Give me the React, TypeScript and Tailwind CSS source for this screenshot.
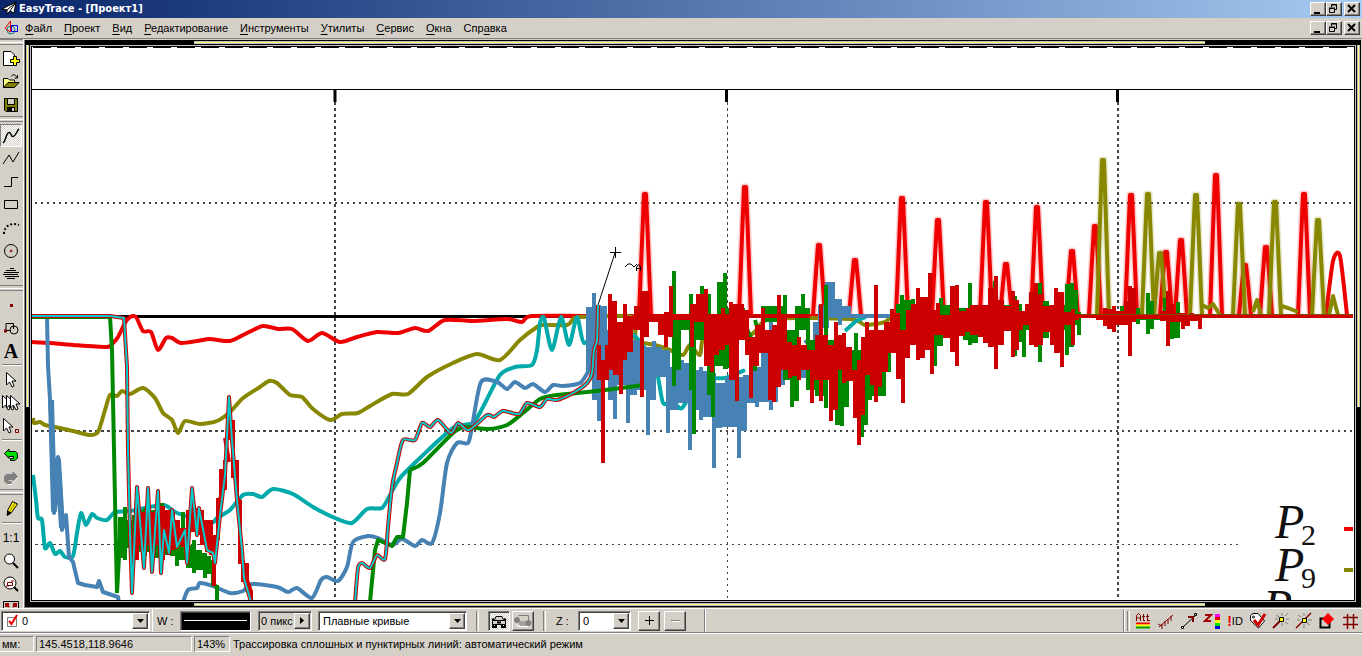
import React from 'react';

type Bar = [number, number, number];

const raised =
  'border border-t-white border-l-white border-r-[#404040] border-b-[#404040] shadow-[inset_-1px_-1px_0_#808080] bg-[#d4d0c8]';
const sunken =
  'border border-t-[#808080] border-l-[#808080] border-r-white border-b-white shadow-[inset_1px_1px_0_#404040]';
const dither =
  'bg-[repeating-conic-gradient(#ffffff_0_25%,#d4d0c8_0_50%)] bg-[length:2px_2px]';

// vertical columns, joined by the range that each shares with its neighbour
const noise = (bars: Bar[]) =>
  bars
    .map(([x, top, bottom], i) => {
      const column = `M${x} ${top}V${bottom}`;
      const next = bars[i + 1];
      if (!next) return column;
      const hi = Math.max(top, next[1]) + 2;
      const lo = Math.min(bottom, next[2]) - 2;
      return hi < lo ? `${column}M${x} ${hi}H${next[0]}V${lo}H${x}Z` : `${column}M${x} ${lo}L${next[0]} ${hi}`;
    })
    .join('');

// Catmull-Rom curve through "x y" pairs
const smooth = (source: string) => {
  const p = source.split(' ').map((pair) => pair.split(',').map(Number));
  let d = `M${p[0][0]} ${p[0][1]}`;
  for (let i = 0; i < p.length - 1; i++) {
    const a = p[Math.max(i - 1, 0)];
    const b = p[i];
    const c = p[i + 1];
    const e = p[Math.min(i + 2, p.length - 1)];
    d += `C${b[0] + (c[0] - a[0]) / 8} ${b[1] + (c[1] - a[1]) / 8} ${c[0] - (e[0] - b[0]) / 8} ${c[1] - (e[1] - b[1]) / 8} ${c[0]} ${c[1]}`;
  }
  return d;
};

const spike = (x: number, top: number) => {
  const shoulder = Math.round(top + (316 - top) * 0.4);
  return `M${x - 6} 315L${x - 3} ${shoulder}L${x - 1} ${top + 2}h2L${x + 3} ${shoulder}L${x + 6} 315`;
};

const redSpikes: [number, number][] = [
  [645, 192], [745, 185], [819, 243], [855, 258], [902, 196], [938, 218], [986, 200],
  [1006, 262], [1037, 205], [1072, 249], [1095, 224], [1131, 193], [1166, 250], [1181, 238],
  [1216, 173], [1245, 263], [1266, 245], [1304, 192],
];

const oliveSpikes: [number, number][] = [
  [1103, 158], [1148, 192], [1160, 251], [1196, 193], [1239, 202], [1275, 200], [1318, 218],
];

const blueBars: Bar[] = [
  [588, 307, 373], [594, 293, 400], [599, 305, 421], [605, 306, 372], [610, 330, 400],
  [615, 335, 419], [622, 330, 385], [628, 350, 423], [635, 340, 395], [642, 308, 390],
  [648, 347, 435], [654, 341, 400], [660, 347, 377], [668, 350, 433], [676, 367, 410],
  [682, 360, 403], [690, 363, 450], [695, 370, 410], [701, 367, 420], [707, 371, 417],
  [714, 373, 468], [720, 383, 428], [727, 377, 427], [733, 377, 427], [739, 377, 458],
  [745, 375, 431], [752, 360, 403], [757, 367, 407], [763, 352, 402], [771, 322, 410],
  [776, 365, 402], [783, 357, 385], [794, 360, 378], [805, 350, 378], [815, 322, 342],
  [820, 305, 340], [827, 282, 328], [833, 282, 317], [840, 299, 325], [849, 306, 317],
];

const greenLeft: Bar[] = [
  [120, 517, 558], [125, 507, 560], [129, 520, 548], [134, 515, 555], [139, 510, 552],
  [145, 508, 556], [151, 510, 552], [157, 506, 558], [162, 503, 552], [167, 510, 555],
  [172, 512, 556], [177, 530, 566], [183, 512, 560], [188, 545, 568], [194, 540, 573],
  [200, 550, 570], [205, 553, 578], [209, 556, 574], [213, 560, 586], [217, 585, 602],
];

const greenMid: Bar[] = [
  [674, 271, 386], [679, 320, 370], [686, 316, 330], [691, 294, 390], [694, 320, 434],
  [702, 286, 340], [709, 294, 395], [713, 350, 417], [719, 282, 366], [725, 273, 369],
  [730, 308, 368], [737, 316, 330], [743, 308, 322], [755, 345, 371], [763, 306, 322],
  [785, 295, 380], [792, 330, 407], [797, 306, 401], [803, 294, 330], [808, 308, 390],
  [817, 340, 396], [826, 285, 408], [832, 340, 380], [837, 350, 425], [842, 350, 426],
  [847, 350, 407], [856, 333, 370], [862, 350, 437], [866, 350, 425], [870, 350, 400],
  [884, 350, 396], [889, 340, 372], [898, 304, 337], [902, 295, 330], [908, 300, 338],
  [913, 299, 344], [924, 305, 330], [935, 310, 366], [941, 298, 346], [955, 305, 330],
  [965, 308, 340], [970, 283, 345], [976, 308, 343], [986, 305, 330], [995, 281, 330],
  [1005, 305, 330], [1015, 296, 356], [1020, 304, 342], [1024, 312, 357], [1033, 305, 330],
  [1040, 283, 362], [1047, 301, 338], [1057, 305, 330], [1067, 284, 355], [1072, 283, 347],
  [1076, 290, 325], [1079, 312, 335],
];

const greenRight: Bar[] = [
  [1122, 306, 320], [1130, 308, 322], [1138, 308, 324], [1143, 314, 320], [1148, 293, 334],
  [1152, 301, 329], [1158, 314, 320], [1165, 298, 321], [1172, 316, 339], [1178, 302, 338],
];

const darkLeft: Bar[] = [
  [137, 490, 560], [142, 512, 545], [148, 490, 545], [153, 512, 556], [158, 495, 545],
  [163, 506, 560], [168, 510, 548], [173, 512, 550], [178, 520, 545], [183, 528, 547],
  [188, 510, 555], [192, 490, 532], [197, 508, 535], [202, 510, 545], [207, 520, 552],
  [211, 520, 555], [214, 535, 586], [218, 498, 540], [221, 469, 500], [225, 460, 490],
  [229, 397, 440], [233, 420, 478], [237, 460, 500], [240, 500, 564], [243, 560, 582],
  [247, 563, 582], [251, 590, 602],
];

const darkMid: Bar[] = [
  [599, 345, 380], [603, 360, 463], [607, 345, 380], [610, 294, 370], [615, 301, 375],
  [621, 322, 394], [625, 304, 360], [631, 316, 352], [636, 306, 330], [642, 291, 397],
  [647, 291, 337], [654, 315, 322], [660, 315, 335], [666, 312, 347], [671, 286, 337],
  [676, 315, 320], [685, 315, 320], [692, 304, 347], [698, 294, 322], [706, 289, 366],
  [712, 316, 372], [717, 315, 355], [723, 308, 350], [727, 315, 345], [731, 302, 380],
  [737, 304, 401], [742, 304, 340], [747, 310, 355], [751, 337, 398], [757, 325, 366],
  [763, 308, 353], [770, 330, 400], [774, 325, 402], [779, 295, 387], [785, 315, 370],
  [790, 342, 378], [795, 345, 376], [799, 337, 380], [805, 345, 370], [812, 350, 403],
  [817, 335, 380], [821, 304, 401], [826, 335, 380], [831, 345, 421], [836, 322, 410],
  [840, 335, 370], [844, 333, 383], [850, 347, 381], [855, 370, 418], [859, 360, 445],
  [863, 337, 415], [867, 322, 375], [872, 330, 385], [876, 285, 402], [880, 330, 387],
  [886, 322, 372], [892, 309, 353], [898, 313, 379], [903, 330, 403], [908, 310, 358],
  [913, 304, 345], [918, 288, 360], [923, 297, 358], [930, 273, 350], [932, 310, 374],
  [938, 303, 335], [945, 315, 338], [952, 286, 352], [957, 285, 366], [963, 311, 336],
  [968, 308, 332], [972, 305, 335], [980, 305, 337], [985, 305, 343], [990, 288, 347],
  [996, 276, 369], [1002, 300, 345], [1007, 306, 331], [1013, 291, 357], [1017, 300, 350],
  [1021, 311, 330], [1027, 304, 325], [1031, 292, 345], [1036, 283, 347], [1041, 294, 345],
  [1047, 306, 332], [1052, 305, 345], [1056, 288, 353], [1062, 292, 367], [1067, 312, 325],
  [1073, 309, 345], [1077, 314, 320],
];

const darkRight: Bar[] = [
  [1098, 315, 320], [1105, 308, 326], [1109, 309, 329], [1114, 306, 332], [1122, 311, 325],
  [1126, 301, 325], [1130, 286, 356], [1134, 288, 322], [1142, 315, 319], [1155, 315, 319],
  [1162, 311, 321], [1168, 291, 346], [1172, 304, 322], [1183, 313, 329], [1188, 314, 326],
  [1192, 313, 321], [1200, 314, 329],
];

const traceLeft =
  'M32 316H110L124 318L127 367L128 450L130 533L132 593L137 487L144 568L148 488L152 572L158 491L161 573L164 530L169 553L172 510L177 547L185 530L187 563L192 488L197 535L199 508L207 550L213 553L215 563L220 515L225 475L229 397L232 440L237 500L242 550L244 578L251 602';
const traceRight = smooth(
  '355,602 358,568 362,563 370,568 377,555 385,559 388,527 392,487 397,463 403,440 415,440 422,423 430,427 438,420 451,433 458,423 469,430 487,415 494,417 503,411 519,414 527,403 540,407 547,399 557,400 573,393 587,383 592,373 594,350 597,340 598,305'
);

const Plot: React.FC = () => (
  <svg
    className="block h-full w-full"
    role="img"
    aria-label="Растр с трассируемыми кривыми"
    fill="none"
    strokeLinejoin="round"
  >
    <g transform="translate(-32 -47)">
      <path d="M32 47.5H1353" stroke="#000" strokeDasharray="18 6" strokeDashoffset="23" />
      <path d="M32 89.5H1353" stroke="#000" />
      <g stroke="#444">
        <path d="M35 203H1353" strokeWidth="2" strokeDasharray="2 4" />
        <path d="M35 431H330" strokeWidth="2" strokeDasharray="3 3" />
        <path d="M330 431H1353" strokeWidth="2" strokeDasharray="2 4" />
        <path d="M35 544.5H330" strokeDasharray="3 3" />
        <path d="M330 544.5H1240" strokeDasharray="2 4" />
        <path d="M335 102V600" strokeWidth="2" strokeDasharray="3 3" />
        <path d="M727.500 102V440" strokeDasharray="3 3" />
        <path d="M727.500 440V600" strokeDasharray="2 4" />
        <path d="M1118 102V600" strokeWidth="2" strokeDasharray="3 3" />
      </g>
      <path d="M335 90V102M726.500 90V102M1117.500 90V102" stroke="#000" strokeWidth="3" />
      <path d="M32 316.500H640" stroke="#000" strokeWidth="3" />

      <g stroke="#ee0000" strokeWidth="4">
        <path
          d={smooth(
            '32,342 50,343 73,345 107,347 113,343 118,337 125,323 130,317 136,317 143,331 151,332 158,350 166,338 172,338 181,343 197,341 210,339 230,341 247,333 263,326 278,329 292,329 308,341 322,333 340,342 357,337 377,332 398,333 415,328 428,331 445,320 473,321 507,319 522,322 532,316 600,316 830,316'
          )}
        />
        <path d={smooth('1326,315 1333,261 1340,256 1347,315')} />
        {redSpikes.map(([x, top]) => (
          <g key={x}>
            <path d={spike(x, top)} strokeWidth="7" opacity="0.2" />
            <path d={spike(x, top)} />
          </g>
        ))}
      </g>

      <g stroke="#888800" strokeWidth="4">
        <path
          d={smooth(
            '33,418 34,423 40,422 45,425 55,427 73,431 89,435 98,432 105,410 110,395 117,396 122,391 130,394 143,388 155,398 163,413 172,420 178,433 185,421 200,424 217,421 230,412 243,398 260,387 269,381 277,383 290,395 302,397 313,409 330,420 342,414 358,413 370,406 392,394 408,394 427,377 453,363 477,354 500,360 520,340 537,327 543,325 567,325 573,319 580,317 632,317 636,340 655,345 670,350 683,355 690,345 700,355 706,335 750,335 770,319 850,319 865,325 885,322 890,317'
          )}
        />
        <path d="M1202 305L1208 308L1213 304L1220 315M1281 306L1288 308L1298 312M1253 312L1257 300L1261 315M1329 315L1333 296L1338 315" />
        {oliveSpikes.map(([x, top]) => (
          <g key={x}>
            <path d={spike(x, top)} strokeWidth="7" opacity="0.2" />
            <path d={spike(x, top)} />
          </g>
        ))}
      </g>

      <path
        stroke="#00aaaa"
        strokeWidth="4"
        d={smooth(
          '33,475 36,500 38,518 42,520 45,548 50,543 55,554 60,551 65,557 73,556 77,533 81,513 86,525 92,514 97,518 107,520 115,512 130,511 163,505 177,513 210,523 217,518 230,510 243,495 253,494 262,497 273,489 293,494 313,507 335,518 352,523 367,509 382,508 390,495 400,478 420,458 453,428 473,423 483,407 500,375 515,367 532,365 537,350 540,323 544,318 552,350 561,317 569,345 577,317 584,343 600,330 628,345 634,335 655,365 663,403 672,400 682,408 700,380 725,378 745,370'
        )}
      />
      <path d="M845 331L856 321L866 317" stroke="#00aaaa" strokeWidth="4" />

      <g stroke="#4682b4" strokeWidth="4">
        <path d="M47 317L48 366L52 433L54 513L58 457L61 500L62 530L66 515L69 557L73 562L78 583L85 585L97 587L99 581L103 592L118 597L119 603" />
        <path d="M51 400L54 510L58 460L62 528" strokeWidth="6" />
        <path
          d={smooth(
            '183,602 188,590 197,588 200,583 213,586 230,593 243,591 252,584 277,587 288,592 297,588 312,598 321,580 327,577 338,581 347,567 353,542 368,536 378,538 392,545 402,539 415,546 422,540 432,543 440,513 447,463 457,443 468,443 472,427 481,382 497,382 507,389 515,382 525,388 533,384 545,392 553,385 563,386 580,383 588,372'
          )}
        />
        <path d={noise(blueBars)} fill="#4682b4" strokeWidth="4" strokeLinejoin="miter" />
        <path d="M830 316H905" />
      </g>

      <g stroke="#008800" strokeWidth="4" strokeLinejoin="miter">
        <path d="M32 317H110L112 350L115 500L117 593L121 520" />
        <path d={noise(greenLeft)} fill="#008800" />
        <path d="M370 602L375 550L378 540L392 546L397 537L403 537L407 503L410 470" strokeLinejoin="round" />
        <path d={smooth('410,470 423,463 453,433 465,427 488,429 507,425 523,413 540,399 557,395 597,391 644,385')} />
        <path d={noise(greenMid)} fill="#008800" />
        <path d={noise(greenRight)} fill="#008800" />
      </g>

      <g stroke="#cc0000" strokeWidth="4">
        <path d="M640 316H810M1070 316H1353" />
        <g fill="#cc0000" strokeLinejoin="miter">
          <path d={noise(darkLeft)} />
          <path d={noise(darkMid)} />
          <path d={noise(darkRight)} />
        </g>
        <path d={traceLeft} />
        <path d={traceRight} />
      </g>
      <path d="M1080 314.500H1353" stroke="#884400" />
      <g stroke="#00cccc" strokeWidth="2">
        <path d={traceLeft} />
        <path d={traceRight} />
      </g>

      {/* rubber band and cursor */}
      <path d="M598 305L615 253" stroke="#000" />
      <path d="M610 252.500H621M615.500 247V258" stroke="#000" />
      <path d="M625 267L628 264L631 264L634 267L637 264M636.500 271V267L638.500 264.500L640.500 267V271M637 268.500H641" stroke="#000" />

      <g fill="#111" className="font-['Liberation_Serif',serif]" fontSize="48" fontStyle="italic">
        <text x="1275" y="538">
          P<tspan x="1301" dy="7" fontSize="30" fontStyle="normal">2</tspan>
        </text>
        <text x="1275" y="581">
          P<tspan x="1301" dy="7" fontSize="30" fontStyle="normal">9</tspan>
        </text>
        <text x="1263" y="623">P</text>
      </g>
      <path d="M1344 529H1353" stroke="#ee0000" strokeWidth="4" />
      <path d="M1344 570H1353" stroke="#888800" strokeWidth="4" />
    </g>
  </svg>
);

const Icon: React.FC<{ children: React.ReactNode }> = ({ children }) => (
  <svg width="18" height="18" viewBox="0 0 18 18" fill="none" stroke="#000" className="shrink-0">
    {children}
  </svg>
);

const Tool: React.FC<{ label: string; active?: boolean; children: React.ReactNode }> = ({
  label,
  active,
  children,
}) => (
  <button
    aria-label={label}
    aria-pressed={active}
    className={`flex h-[23px] w-[22px] shrink-0 items-center justify-center ${
      active ? `${dither} border border-t-[#808080] border-l-[#808080] border-r-white border-b-white` : ''
    }`}
  >
    {children}
  </button>
);

const Grip = () => (
  <div className="flex h-[8px] shrink-0 flex-col justify-center border-t border-[#808080]">
    <div className="h-[3px] border-t border-b border-t-white border-b-[#808080]" />
  </div>
);

const Rule = () => (
  <div className="flex h-[6px] w-[20px] shrink-0 items-center self-center">
    <div className="h-[2px] w-full border-t border-b border-t-[#808080] border-b-white" />
  </div>
);

const arrow = 'M2.500 1.500V14L5.500 11L8 16L10 15L8 10H12Z';

const SideBar: React.FC = () => (
  <aside className="flex w-[24px] shrink-0 flex-col overflow-hidden border-r border-white">
    <Grip />
    <Tool label="Новый">
      <Icon>
        <path d="M1.500 1.500H9L12.500 5V15.500H1.500Z" fill="#fff" />
        <path d="M11.500 6.500h3v3h3v3h-3v3h-3v-3h-3v-3h3Z" fill="#ffff00" />
      </Icon>
    </Tool>
    <Tool label="Открыть">
      <Icon>
        <path d="M1.500 14.500V5.500H6L7.500 7H12.500V10" fill="#ffff80" />
        <path d="M1.500 14.500L6 9.500H17L12.500 14.500Z" fill="#808000" />
        <path d="M9 3.500C11 1 13 1 15 4.500M15.500 2V5H12.500" />
      </Icon>
    </Tool>
    <Tool label="Сохранить">
      <Icon>
        <path d="M2.500 2.500H15.500V15.500H4L2.500 14Z" fill="#808000" />
        <path d="M5.500 2.500H12.500V8.500H5.500Z" fill="#d4d0c8" />
        <path d="M5 11H13V16H5Z" fill="#000" stroke="none" />
        <path d="M10 12H12V15H10Z" fill="#d4d0c8" stroke="none" />
      </Icon>
    </Tool>
    <Grip />
    <Tool label="Кривая" active>
      <Icon>
        <path d="M1 16C4 14 4 6 7 5.500C9.500 5 8.500 10 11 9.500C14 9 14 5 17 2" strokeWidth="1.500" />
      </Icon>
    </Tool>
    <Tool label="Ломаная"><Icon><path d="M1 14L7 5L11 12L17 2" /></Icon></Tool>
    <Tool label="Ортогональная линия"><Icon><path d="M2 13.500H9.500V4.500H16" /></Icon></Tool>
    <Tool label="Прямоугольник"><Icon><path d="M2.500 4.500H15.500V12.500H2.500Z" /></Icon></Tool>
    <Tool label="Пунктирная линия">
      <Icon><path d="M2 15C2 7 9 3 17 6" strokeWidth="2" strokeDasharray="2 2" /></Icon>
    </Tool>
    <Tool label="Окружность">
      <Icon>
        <circle cx="9" cy="9" r="6.500" />
        <path d="M7.500 9H10.500M9 7.500V10.500" stroke="#800000" />
      </Icon>
    </Tool>
    <Tool label="Штриховка">
      <Icon><path d="M8 3.500H12M4 5.500H14M2 7.500H17M1 9.500H16M3 11.500H17M5 13.500H13" /></Icon>
    </Tool>
    <Grip />
    <Tool label="Точка"><Icon><path d="M8 9.500H11" stroke="#800000" strokeWidth="3" /></Icon></Tool>
    <Tool label="Полигон">
      <Icon>
        <path d="M4 12V4.500H11.500V10M4 11.500H9" />
        <circle cx="12" cy="11" r="4" />
        <path d="M2 12H5" stroke="#800000" strokeWidth="3" />
      </Icon>
    </Tool>
    <Tool label="Текст">
      <span className="font-['Liberation_Serif',serif] text-[20px] leading-[20px] font-bold">A</span>
    </Tool>
    <Rule />
    <Tool label="Выбор">
      <Icon><g transform="translate(2 0)"><path d={arrow} fill="#fff" /></g></Icon>
    </Tool>
    <Tool label="Групповой выбор">
      <Icon>
        <g transform="translate(-2 0)"><path d={arrow} fill="#fff" /></g>
        <g transform="translate(2 0)"><path d={arrow} fill="#fff" /></g>
        <g transform="translate(6 0)"><path d={arrow} fill="#fff" /></g>
      </Icon>
    </Tool>
    <Tool label="Выбор узла">
      <Icon>
        <g transform="translate(-1 0)"><path d={arrow} fill="#fff" /></g>
        <path d="M13.500 12.500H16.500V15.500H13.500Z" stroke="#800000" />
      </Icon>
    </Tool>
    <Rule />
    <Tool label="Отменить">
      <Icon><path d="M2.500 7.500L7 3V5.500H13.500L15.500 7.500V12L13 14.500H8.500V12.500H11.500V10.500H7V12.500Z" fill="#00dd00" /></Icon>
    </Tool>
    <Tool label="Повторить">
      <Icon>
        <path d="M15.500 7.500L11 3V5.500H4L2.500 7.500V12L5 14.500H9V12.500H6V10.500H11V12.500Z" fill="#808080" stroke="#808080" />
        <path d="M6 15.500H10M11 13L16 8.500" stroke="#fff" />
      </Icon>
    </Tool>
    <Grip />
    <Tool label="Карандаш">
      <Icon>
        <path d="M5.500 10.500L10.500 1.500L15.500 4L9.500 12.500L5.500 15.500Z" fill="#ffee00" />
        <path d="M5 15L6 11L9 13Z" fill="#000" />
        <path d="M8 11L13 3" stroke="#808000" />
      </Icon>
    </Tool>
    <Rule />
    <Tool label="Масштаб один к одному"><span className="text-[12px] leading-[14px]">1:1</span></Tool>
    <Tool label="Лупа">
      <Icon>
        <circle cx="7.500" cy="7" r="5" fill="#fff" />
        <path d="M11 11L16 16" strokeWidth="2" />
      </Icon>
    </Tool>
    <Tool label="Масштаб рамкой">
      <Icon>
        <circle cx="8" cy="8" r="6" fill="#fff" />
        <path d="M5.500 7.500H10.500V10.500H5.500ZM4 11H7M9 6H12" stroke="#800000" />
        <path d="M12 12L16 16" strokeWidth="2" />
      </Icon>
    </Tool>
    <Tool label="Показать всё">
      <Icon>
        <path d="M1.500 3.500H16.500V16.500H1.500Z" fill="#d4d0c8" />
        <path d="M4 9V6H7M4 6L7 9M14 9V6H11M14 6L11 9" stroke="#a00000" strokeWidth="2" />
      </Icon>
    </Tool>
  </aside>
);

const WindowButtons: React.FC<{ target: string }> = ({ target }) => (
  <div className="flex shrink-0 pr-[2px]">
    <button aria-label={`Свернуть ${target}`} className={`h-[14px] w-[16px] ${raised}`}>
      <svg width="14" height="12" viewBox="0 0 14 12"><path d="M3 9H9V11H3Z" /></svg>
    </button>
    <button aria-label={`Восстановить ${target}`} className={`h-[14px] w-[16px] ${raised}`}>
      <svg width="14" height="12" viewBox="0 0 14 12" fill="none" stroke="#000">
        <path d="M4.500 4V1.500H9.500V6.500H8M4 2H10M2.500 5.500H7.500V9.500H2.500ZM2 5H8" />
      </svg>
    </button>
    <button aria-label={`Закрыть ${target}`} className={`ml-[2px] h-[14px] w-[16px] ${raised}`}>
      <svg width="14" height="12" viewBox="0 0 14 12" fill="none" stroke="#000" strokeWidth="2">
        <path d="M3 2L10 9M10 2L3 9" />
      </svg>
    </button>
  </div>
);

// text before the accelerator, the accelerator, text after it
const menu: [string, string, string][] = [
  ['', 'Ф', 'айл'],
  ['', 'П', 'роект'],
  ['', 'В', 'ид'],
  ['', 'Р', 'едактирование'],
  ['', 'И', 'нструменты'],
  ['', 'У', 'тилиты'],
  ['', 'С', 'ервис'],
  ['', 'О', 'кна'],
  ['Спр', 'а', 'вка'],
];

const Drop: React.FC<{ label: string; id: string; value: string; className: string; children?: React.ReactNode }> = ({
  label,
  id,
  value,
  className,
  children,
}) => (
  <div className={`flex h-[20px] shrink-0 items-center bg-white p-px ${sunken} ${className}`}>
    {children}
    <select id={id} aria-label={label} className="h-[16px] min-w-0 flex-1 appearance-none bg-transparent pl-[3px] leading-[14px] outline-none">
      <option>{value}</option>
    </select>
    <span className={`flex h-[16px] w-[16px] items-center justify-center ${raised}`}>
      <svg width="7" height="4" viewBox="0 0 7 4"><path d="M0 0H7L3.500 4Z" /></svg>
    </span>
  </div>
);

const Divider = () => (
  <div className="h-[20px] w-[3px] shrink-0 border-l border-r border-l-[#808080] border-r-white" />
);

const BottomBar: React.FC = () => (
  <div className="flex h-[25px] shrink-0 items-center border-t border-b border-t-white border-b-[#808080] pl-[1px]">
    <Drop id="layer" label="Слой" value="0" className="w-[149px]">
      <svg width="12" height="14" viewBox="0 0 12 14" fill="none" className="ml-[4px]">
        <path d="M.5 3.500H9.500V12.500H.5Z" stroke="#808080" />
        <path d="M2 7L4.500 10L10 1" stroke="#ee0000" strokeWidth="2" />
      </svg>
    </Drop>
    <div className="ml-[2px] h-[23px] w-px bg-white" />
    <span className="ml-[4px] w-[23px] shrink-0">W :</span>
    <button aria-label="Толщина линии" className={`flex h-[20px] w-[71px] shrink-0 items-center bg-black px-[3px] ${sunken}`}>
      <span className="h-px w-full bg-white" />
    </button>
    <div className={`ml-[7px] flex h-[20px] w-[54px] shrink-0 items-center p-px ${sunken}`}>
      <input aria-label="Ширина" defaultValue="0 пикс" className="w-[34px] min-w-0 bg-transparent pl-px outline-none" />
      <button aria-label="Единицы" className={`flex h-[16px] w-[16px] shrink-0 items-center justify-center ${raised}`}>
        <svg width="4" height="7" viewBox="0 0 4 7"><path d="M0 0V7L4 3.500Z" /></svg>
      </button>
    </div>
    <Drop id="mode" label="Тип линии" value="Плавные кривые" className="ml-[6px] w-[149px]" />
    <div className="ml-[9px]"><Divider /></div>
    <button aria-label="Автоматический режим" aria-pressed="true" className={`ml-[9px] flex h-[20px] w-[22px] shrink-0 items-center justify-center ${sunken} ${dither}`}>
      <svg width="16" height="14" viewBox="0 0 16 14" fill="none" stroke="#000">
        <path d="M3.500 6L5 2.500H11L12.500 6M1.500 6.500H14.500V10.500H1.500Z" fill="#d4d0c8" />
        <path d="M2 11V13H5V11M11 11V13H14V11M6 8.500H10M1 6L3 5M15 6L13 5" strokeWidth="2" />
      </svg>
    </button>
    <button aria-label="Ручной режим" className={`ml-[2px] flex h-[20px] w-[22px] shrink-0 items-center justify-center ${raised}`}>
      <svg width="18" height="14" viewBox="0 0 18 14" fill="none" stroke="#808080">
        <path d="M4.500 1.500H14.500V7" />
        <path d="M4 7H14V12H6Z" fill="#808080" fillOpacity=".6" stroke="none" />
        <circle cx="3" cy="6" r="2.500" fill="#808080" />
        <circle cx="14.500" cy="9" r="2.500" fill="#808080" />
        <path d="M2 10.500L5 12.500H14" stroke="#fff" />
      </svg>
    </button>
    <div className="ml-[9px]"><Divider /></div>
    <label htmlFor="z" className="ml-[10px] w-[22px] shrink-0">Z :</label>
    <Drop id="z" label="Z" value="0" className="w-[53px]" />
    <button aria-label="Увеличить" className={`ml-[7px] flex h-[20px] w-[22px] shrink-0 items-center justify-center ${raised}`}>
      <svg width="9" height="9" viewBox="0 0 9 9" stroke="#000"><path d="M0 4.500H9M4.500 0V9" /></svg>
    </button>
    <button aria-label="Уменьшить" className={`ml-[4px] flex h-[20px] w-[22px] shrink-0 items-center justify-center ${raised}`}>
      <svg width="9" height="9" viewBox="0 0 9 9"><path d="M0 4.500H9" stroke="#808080" /><path d="M1 5.500H10" stroke="#fff" /></svg>
    </button>
    <div className="ml-[18px] h-[23px] w-[2px] border-l border-r border-l-[#808080] border-r-white" />
    <div className="ml-auto h-[23px] w-[2px] border-l border-r border-l-[#808080] border-r-white" />
    <div className="ml-[2px]"><Divider /></div>
    <div className="ml-[2px] flex shrink-0 gap-px pr-px">
      <Tool label="Атрибуты">
        <Icon>
          <path d="M2.500 9V3.500L4.500 1.500L6.500 3.500V9M3 6H6M9.500 2V9M8 4.500H11M13.500 2V9M12 4.500H15M10 8.500H11M14 8.500H16" stroke="#800000" />
          <path d="M2 11.500H16" stroke="#ee0000" strokeWidth="2" />
          <path d="M2 13.500H16" stroke="#ffff00" strokeWidth="2" />
          <path d="M2 15.500H16" stroke="#00a000" strokeWidth="2" />
        </Icon>
      </Tool>
      <Tool label="Бергштрихи">
        <Icon><path d="M2 15L16 3M5 12V17M8 9V14M11 7V12M14 4V9M1 12L5 14" stroke="#800000" /></Icon>
      </Tool>
      <Tool label="Вектор">
        <Icon>
          <path d="M3 15L16 3M1.500 14.500h2v2h-2ZM14.500 1.500h2v2h-2Z" fill="#fff" />
          <path d="M8 5H13V10" stroke="#800000" strokeWidth="2" />
        </Icon>
      </Tool>
      <Tool label="Цвет по Z">
        <Icon>
          <path d="M2 3H8L2 9H8" stroke="#a00000" strokeWidth="2" />
          <path d="M12 2H17V5H12Z" fill="#ff00ff" stroke="none" />
          <path d="M12 5H17V8H12Z" fill="#ee0000" stroke="none" />
          <path d="M12 8H17V11H12Z" fill="#ffff00" stroke="none" />
          <path d="M12 11H17V14H12Z" fill="#00dd00" stroke="none" />
          <path d="M12 14H17V17H12Z" fill="#0000ee" stroke="none" />
        </Icon>
      </Tool>
      <Tool label="Проверка ID">
        <span className="text-[14px] leading-[14px] font-bold text-[#ee0000]">!</span>
        <span className="text-[11px] leading-[14px]">ID</span>
      </Tool>
      <Tool label="Проверка атрибутов">
        <Icon>
          <path d="M1.500 3.500L4 1.500H9L15.500 9L9.500 16L1.500 8.500Z" fill="#fff" />
          <circle cx="4.500" cy="5" r="1" />
          <path d="M5 8L9 13L16 2" stroke="#cc0000" strokeWidth="3" />
        </Icon>
      </Tool>
      <Tool label="Узел на конце">
        <Icon>
          <path d="M10 1V4M10 11V14M4 3L7 5M13 10L16 12M14 7H17M3 7H6M13 4L16 1" stroke="#808080" />
          <path d="M1 16L8 9" stroke="#800000" strokeWidth="2" />
          <path d="M7.500 5.500h4v4h-4Z" fill="#ffff00" />
        </Icon>
      </Tool>
      <Tool label="Узел на линии">
        <Icon>
          <path d="M9 1V4M9 12V16M3 3L6 5M12 11L15 13M13 8H17M2 8H5" stroke="#808080" />
          <path d="M1 16L16 1" stroke="#800000" strokeWidth="1.500" />
          <path d="M7.500 6.500h4v4h-4Z" fill="#ffff00" />
        </Icon>
      </Tool>
      <Tool label="Замкнутость">
        <Icon>
          <path d="M2.500 6.500H11.500V15.500H2.500Z" strokeWidth="2" />
          <path d="M10 1L16 7L10 13L4 7Z" fill="#ff0000" stroke="none" />
        </Icon>
      </Tool>
      <Tool label="Сетка">
        <Icon><path d="M6.500 2V17M12.500 2V17M2 5.500H17M2 12.500H17" stroke="#800000" strokeWidth="1.500" /></Icon>
      </Tool>
    </div>
  </div>
);

const RulerX: React.FC = () => (
  <div className="flex h-[3px] shrink-0 pr-[156px] pl-[169px]">
    <div className="flex-1 border-y border-l border-[#c0c0c0] bg-[#ffff80]" />
  </div>
);

const RulerY: React.FC = () => (
  <div className="w-[3px] shrink-0">
    <div className="h-[65%] border-x border-[#c0c0c0] bg-[#ffff80]" />
  </div>
);

const cell = 'h-[16px] shrink-0 border border-t-[#808080] border-l-[#808080] border-r-white border-b-white pl-[2px]';

const App: React.FC = () => (
  <div className="flex h-screen flex-col overflow-hidden bg-[#d4d0c8] font-['Liberation_Sans',sans-serif] text-[11px] leading-[14px] text-black">
    <header className="flex h-[18px] shrink-0 items-center bg-linear-to-r from-[#0a246a] to-[#a6caf0] pl-px">
      <svg width="16" height="16" viewBox="0 0 16 16" stroke="#000">
        <path d="M1 8L15 1L13 12L9 10L6 13V9Z" fill="#fff" />
        <path d="M15 1L6 9M15 1L9 10" fill="none" />
      </svg>
      <h1 className="flex-1 pl-[2px] font-['DejaVu_Sans_Condensed','DejaVu_Sans',sans-serif] font-bold text-white">
        EasyTrace - [Проект1]
      </h1>
      <WindowButtons target="программу" />
    </header>

    <nav className="flex h-[20px] shrink-0 items-center pl-[4px]">
      <svg width="15" height="16" viewBox="0 0 15 16" fill="none">
        <circle cx="7" cy="10" r="4" stroke="#008080" />
        <path d="M1 8.500L6.500 1V12Z" stroke="#ee0000" />
        <path d="M7.500 5.500H13.500V11.500H7.500Z" stroke="#0000ee" />
      </svg>
      <div className="flex flex-1">
        {menu.map(([before, key, after]) => (
          <button key={key} className="px-[6px]">
            {before}
            <u className="underline-offset-2">{key}</u>
            {after}
          </button>
        ))}
      </div>
      <WindowButtons target="документ" />
    </nav>

    <div className="flex min-h-0 flex-1 border-t border-[#808080]">
      <SideBar />
      <main className="mt-px flex min-w-0 flex-1 flex-col border-r border-b border-l border-r-[#d4d0c8] border-b-[#808080] border-l-[#808080] bg-black py-px">
        <RulerX />
        <div className="mt-px mb-px flex min-h-0 flex-1 px-px">
          <RulerY />
          <div className="mx-px min-w-0 flex-1 border border-[#c0c0c0]">
            <div className="h-full border border-black bg-white">
              <Plot />
            </div>
          </div>
          <RulerY />
        </div>
        <RulerX />
      </main>
    </div>

    <BottomBar />

    <footer className="flex h-[23px] shrink-0 items-center border-t border-white pb-[2px]">
      <span className={`w-[34px] ${cell} border-l-0`}>мм:</span>
      <span className={`ml-[2px] w-[156px] ${cell}`}>145.4518,118.9646</span>
      <span className={`ml-[2px] w-[36px] ${cell}`}>143%</span>
      <span className="min-w-0 flex-1 truncate pl-[3px]">
        Трассировка сплошных и пунктирных линий: автоматический режим
      </span>
    </footer>
  </div>
);

export default App;
